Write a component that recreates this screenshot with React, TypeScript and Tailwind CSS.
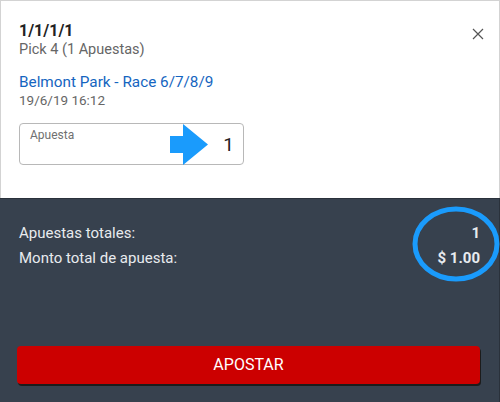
import React from "react";

export default function App() {
  const font = { fontFamily: "Roboto, 'Noto Sans', sans-serif" };
  return (
    <div className="w-[500px] h-[402px] flex flex-col overflow-hidden" style={font}>
      <div className="h-[198px] bg-white border-t border-l border-r border-[#d3d3d3] px-[18px] pt-[20px] relative shrink-0">
        <div className="text-[16px] leading-[20px] font-bold text-[#222]">1/1/1/1</div>
        <div className="text-[14.5px] leading-[18px] text-[#666]">Pick 4 (1 Apuestas)</div>
        <div className="mt-[14px] text-[15.3px] leading-[18px] text-[#1565c0]">Belmont Park - Race 6/7/8/9</div>
        <div className="text-[13.5px] leading-[18px] text-[#666]">19/6/19 16:12</div>
        <div className="mt-[14px] w-[225px] h-[42px] border border-[#b8b8b8] rounded-[4px] relative">
          <div className="absolute left-[10px] top-[4px] text-[12px] leading-[14px] text-[#707070]">Apuesta</div>
          <div className="absolute right-[9px] top-[10px] text-[19px] leading-[22px] text-[#222]">1</div>
          <svg className="absolute left-[150px] top-[0px]" width="40" height="41" viewBox="0 0 40 41">
            <polygon points="0,12 13,12 13,0 38,20.5 13,41 13,29 0,29" fill="#1a9bfc" />
          </svg>
        </div>
        <svg className="absolute left-[471px] top-[27px]" width="12" height="12" viewBox="0 0 12 12">
          <path d="M1 1 L11 11 M11 1 L1 11" stroke="#555" strokeWidth="1.2" fill="none" />
        </svg>
      </div>
      <div className="flex-1 bg-[#37414e] border-t border-[#2a313b] border-r border-r-[#2a313b] px-[19px] flex flex-col relative">
        <div className="mt-[22px] flex justify-between text-[15px] leading-[25px] text-[#e8ebef]">
          <div className="flex flex-col">
            <span>Apuestas totales:</span>
            <span>Monto total de apuesta:</span>
          </div>
          <div className="flex flex-col items-end font-bold pr-[0px]">
            <span>1</span>
            <span>$ 1.00</span>
          </div>
        </div>
        <svg className="absolute left-[412px] top-[7px]" width="88" height="76" viewBox="0 0 88 76">
          <ellipse cx="44" cy="38" rx="41" ry="35" fill="none" stroke="#1a9bfc" strokeWidth="5" />
        </svg>
        <div className="mt-auto mb-[18px] -ml-[2px] w-[463px] h-[38px] bg-[#cc0000] rounded-[4px] shadow-[1px_2px_0_#1c1c1c] flex items-center justify-center text-white text-[16px]">
          APOSTAR
        </div>
      </div>
    </div>
  );
}
